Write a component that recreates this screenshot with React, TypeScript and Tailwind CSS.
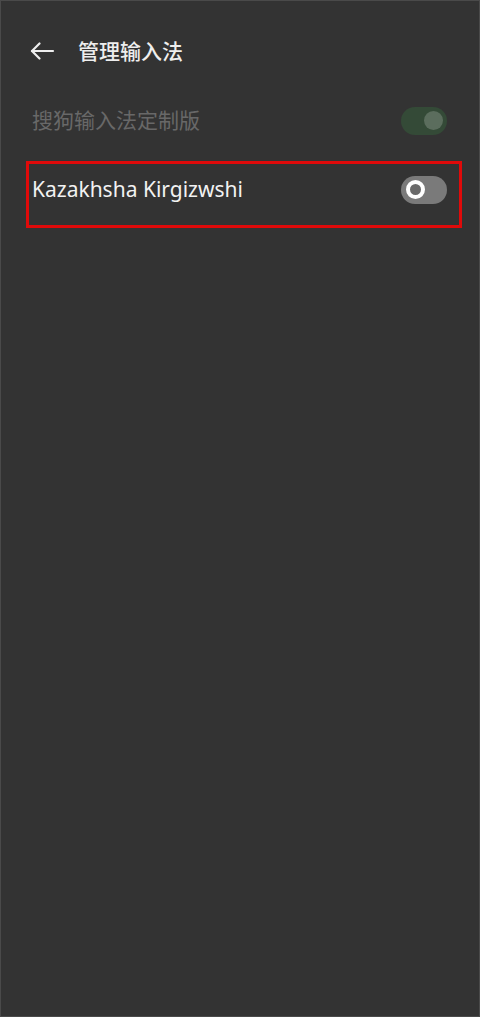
import React from "react";

const font = '"Noto Sans", "Noto Sans CJK SC", sans-serif';

function Toggle({ on, disabled }: { on: boolean; disabled?: boolean }) {
    if (on && disabled) {
        return (
            <div className="w-[46px] h-[28px] rounded-full bg-[#344a37] flex items-center justify-end pr-[4px]">
                <div className="w-[19px] h-[19px] rounded-full bg-[#5b6d5d]" />
            </div>
        );
    }
    return (
        <div className="w-[46px] h-[28px] rounded-full bg-[#7a7a7a] flex items-center pl-[5px]">
            <div className="w-[19px] h-[19px] rounded-full border-[4px] border-white bg-[#6a6a6a]" />
        </div>
    );
}

export default function App() {
    return (
        <div
            className="relative w-[480px] h-[1017px] bg-[#333333] border border-[#4a4a4a] overflow-hidden"
            style={{ fontFamily: font }}
        >
            {/* header */}
            <div className="flex items-center h-[40px] mt-[30px] mb-[15px] px-[29px]">
                <svg width="25" height="18" viewBox="0 0 25 18" fill="none" stroke="#eeeeee" strokeWidth="2.2" strokeLinecap="round" strokeLinejoin="round">
                    <path d="M23 9H2" />
                    <path d="M9.5 1.5L2 9l7.5 7.5" />
                </svg>
                <span className="ml-[23px] text-[21px] font-medium text-[#eeeeee] leading-none">管理输入法</span>
            </div>

            {/* rows */}
            <div className="flex items-center justify-between h-[69px] pl-[31px] pr-[32px]">
                <span className="text-[21px] text-[#686868] leading-none">搜狗输入法定制版</span>
                <Toggle on disabled />
            </div>
            <div className="flex items-center justify-between h-[69px] pl-[31px] pr-[32px]">
                <span className="text-[21px] text-[#f2f2f2] leading-none">Kazakhsha Kirgizwshi</span>
                <Toggle on={false} />
            </div>

            {/* annotation box */}
            <div className="absolute left-[25px] top-[160px] w-[436px] h-[67px] border-[3px] border-[#e00a0a]" />
        </div>
    );
}
